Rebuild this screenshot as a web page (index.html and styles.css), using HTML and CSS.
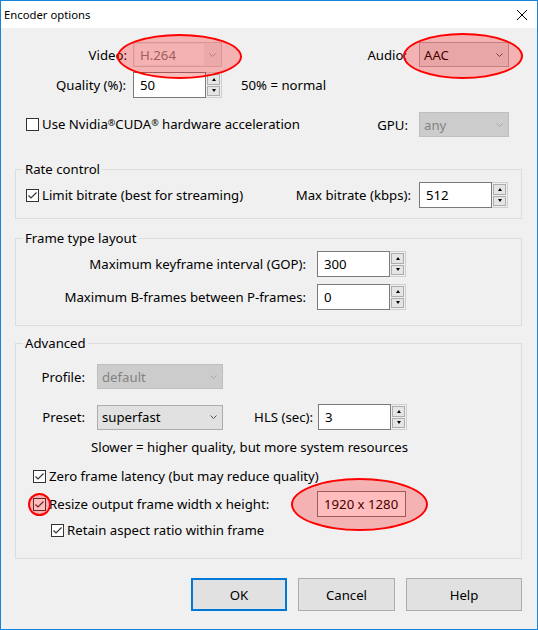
FILE: index.html
```html
<!DOCTYPE html>
<html lang="en">
<head>
<meta charset="utf-8">
<title>Encoder options</title>
<link rel="stylesheet" href="styles.css">
</head>
<body>
<div class="window">
  <div class="titlebar">
    <span class="title">Encoder options</span>
    <svg class="close" width="10" height="10" viewBox="0 0 10 10"><path d="M0 0L10 10M10 0L0 10" stroke="#000" stroke-width="1"/></svg>
  </div>
  <div class="dialog">
    <div class="row row-codec">
      <span class="lbl lbl-video">Video:</span>
      <div class="combo combo-video"><span class="combo-edit">H.264</span><svg class="chev" width="7" height="4" viewBox="0 0 7 4"><path d="M0.5 0.5L3.5 3.5L6.5 0.5" fill="none" stroke="#a0a0a0"/></svg></div>
      <span class="lbl lbl-audio">Audio:</span>
      <div class="combo combo-audio"><span class="combo-text">AAC</span><svg class="chev" width="7" height="4" viewBox="0 0 7 4"><path d="M0.5 0.5L3.5 3.5L6.5 0.5" fill="none" stroke="#505050"/></svg></div>
    </div>
    <div class="row row-quality">
      <span class="lbl lbl-quality">Quality (%):</span>
      <div class="spin spin-quality"><span class="spin-field">50</span><span class="spin-btns"><span class="sb"><i class="tri-up"></i></span><span class="sb"><i class="tri-down"></i></span></span></div>
      <span class="lbl hint">50% = normal</span>
    </div>
    <div class="row row-cuda">
      <div class="check"><svg class="box" viewBox="0 0 13 13"><rect x="0.5" y="0.5" width="12" height="12" fill="#fff" stroke="#333"/></svg><span class="lbl">Use Nvidia<span class="reg">®</span>CUDA<span class="reg">®</span> hardware acceleration</span></div>
      <span class="lbl lbl-gpu">GPU:</span>
      <div class="combo combo-gpu disabled"><span class="combo-text">any</span><svg class="chev" width="7" height="4" viewBox="0 0 7 4"><path d="M0.5 0.5L3.5 3.5L6.5 0.5" fill="none" stroke="#a8a8a8"/></svg></div>
    </div>

    <fieldset class="group group-rate">
      <legend>Rate control</legend>
      <div class="row row-rate">
        <div class="check"><svg class="box" viewBox="0 0 13 13"><rect x="0.5" y="0.5" width="12" height="12" fill="#fff" stroke="#333"/><path d="M2.5 6.5L5 9L10.5 3.5" fill="none" stroke="#333" stroke-width="1.2"/></svg><span class="lbl">Limit bitrate (best for streaming)</span></div>
        <span class="lbl lbl-maxbr">Max bitrate (kbps):</span>
        <div class="spin"><span class="spin-field">512</span><span class="spin-btns"><span class="sb"><i class="tri-up"></i></span><span class="sb"><i class="tri-down"></i></span></span></div>
      </div>
    </fieldset>

    <fieldset class="group group-frame">
      <legend>Frame type layout</legend>
      <div class="row row-frame">
        <span class="lbl lbl-frame">Maximum keyframe interval (GOP):</span>
        <div class="spin spin-frame"><span class="spin-field">300</span><span class="spin-btns"><span class="sb"><i class="tri-up"></i></span><span class="sb"><i class="tri-down"></i></span></span></div>
      </div>
      <div class="row row-frame row-b">
        <span class="lbl lbl-frame">Maximum B-frames between P-frames:</span>
        <div class="spin spin-frame"><span class="spin-field">0</span><span class="spin-btns"><span class="sb"><i class="tri-up"></i></span><span class="sb"><i class="tri-down"></i></span></span></div>
      </div>
    </fieldset>

    <fieldset class="group group-adv">
      <legend>Advanced</legend>
      <div class="row row-profile">
        <span class="lbl lbl-adv">Profile:</span>
        <div class="combo combo-adv disabled"><span class="combo-text">default</span><svg class="chev" width="7" height="4" viewBox="0 0 7 4"><path d="M0.5 0.5L3.5 3.5L6.5 0.5" fill="none" stroke="#a8a8a8"/></svg></div>
      </div>
      <div class="row row-preset">
        <span class="lbl lbl-adv">Preset:</span>
        <div class="combo combo-adv"><span class="combo-text">superfast</span><svg class="chev" width="7" height="4" viewBox="0 0 7 4"><path d="M0.5 0.5L3.5 3.5L6.5 0.5" fill="none" stroke="#505050"/></svg></div>
        <span class="lbl lbl-hls">HLS (sec):</span>
        <div class="spin"><span class="spin-field">3</span><span class="spin-btns"><span class="sb"><i class="tri-up"></i></span><span class="sb"><i class="tri-down"></i></span></span></div>
      </div>
      <div class="lbl note">Slower = higher quality, but more system resources</div>
      <div class="row row-zero">
        <div class="check"><svg class="box" viewBox="0 0 13 13"><rect x="0.5" y="0.5" width="12" height="12" fill="#fff" stroke="#333"/><path d="M2.5 6.5L5 9L10.5 3.5" fill="none" stroke="#333" stroke-width="1.2"/></svg><span class="lbl">Zero frame latency (but may reduce quality)</span></div>
      </div>
      <div class="row row-resize">
        <div class="check check-resize"><svg class="box" viewBox="0 0 13 13"><rect x="0.5" y="0.5" width="12" height="12" fill="#fff" stroke="#333"/><path d="M2.5 6.5L5 9L10.5 3.5" fill="none" stroke="#333" stroke-width="1.2"/></svg><span class="lbl">Resize output frame width x height:</span></div>
        <div class="sizebox">1920 x 1280</div>
      </div>
      <div class="row row-retain">
        <div class="check"><svg class="box" viewBox="0 0 13 13"><rect x="0.5" y="0.5" width="12" height="12" fill="#fff" stroke="#333"/><path d="M2.5 6.5L5 9L10.5 3.5" fill="none" stroke="#333" stroke-width="1.2"/></svg><span class="lbl">Retain aspect ratio within frame</span></div>
      </div>
    </fieldset>

    <div class="buttons">
      <div class="btn btn-ok">OK</div>
      <div class="btn btn-cancel">Cancel</div>
      <div class="btn btn-help">Help</div>
    </div>
  </div>

  <div class="mark mark-video"></div>
  <div class="mark mark-audio"></div>
  <div class="mark mark-resize"></div>
  <div class="mark mark-size"></div>
</div>
</body>
</html>
```

FILE: styles.css
```css
* { box-sizing: border-box; }
html, body { margin: 0; padding: 0; }
body {
  font-family: "Noto Sans", "Open Sans", sans-serif;
  font-size: 13.2px;
  color: #000;
  background: #fff;
}

.window {
  position: relative;
  width: 538px;
  height: 630px;
  border: 1px solid #1883d7;
  background: #f0f0f0;
  display: flex;
  flex-direction: column;
  overflow: hidden;
}

.titlebar {
  height: 27px;
  flex: none;
  background: #fff;
  display: flex;
  align-items: center;
  justify-content: space-between;
  padding: 0 10px 0 3px;
  font-size: 11.3px;
}
.close { display: block; }

.dialog { flex: 1; display: flex; flex-direction: column; }

.row { display: flex; align-items: center; }
.lbl { white-space: nowrap; line-height: 16px; }

/* combos */
.combo {
  height: 25px;
  flex: none;
  display: flex;
  align-items: center;
  border: 1px solid #adadad;
  background: #e1e1e1;
  padding: 0 5px 0 4px;
}
.combo-text { flex: 1; line-height: 16px; }
.chev { flex: none; display: block; }
.combo.disabled { background: #cccccc; border-color: #bfbfbf; color: #838383; }
.combo-video {
  background: #e4e4e4;
  border-color: #cccccc;
  padding: 1px 5px 1px 1px;
  color: #808080;
}
.combo-edit {
  width: 69px;
  height: 100%;
  background: #f0f0f0;
  padding-left: 5px;
  display: flex;
  align-items: center;
  margin-right: auto;
}

/* spinners */
.spin { display: flex; width: 89px; height: 26px; flex: none; }
.spin-field {
  flex: 1;
  background: #fff;
  border: 1px solid #7a7a7a;
  padding-left: 6px;
  display: flex;
  align-items: center;
}
.spin-btns {
  width: 16px;
  display: flex;
  flex-direction: column;
  gap: 1px;
  padding: 1px;
  border: 1px solid #cfcfcf;
  border-left: none;
  background: #f0f0f0;
}
.sb {
  flex: 1;
  border: 1px solid #adadad;
  background: #e5e5e5;
  display: flex;
  align-items: center;
  justify-content: center;
}
.tri-up, .tri-down { display: block; width: 1px; height: 0; border-left: 2px solid transparent; border-right: 2px solid transparent; }
.tri-up { border-bottom: 3px solid #000; }
.tri-down { border-top: 3px solid #000; }

/* checkboxes */
.check { display: flex; align-items: center; gap: 3px; flex: none; }
.box { width: 13px; height: 13px; display: block; flex: none; }
.reg { font-size: 9px; position: relative; top: -3px; }

/* top rows */
.row-codec { margin-top: 14px; height: 25px; padding-right: 28px; }
.lbl-video { width: 126px; text-align: right; flex: none; }
.combo-video { margin-left: 6px; width: 89px; }
.lbl-audio { flex: 1; text-align: right; margin-right: 12px; }
.combo-audio { width: 90px; }

.row-quality { margin-top: 5px; height: 26px; }
.lbl-quality { width: 125px; text-align: right; flex: none; }
.spin-quality { margin-left: 7px; }
.hint { margin-left: 19px; }

.row-cuda { margin-top: 14px; height: 25px; padding: 0 28px 0 25px; }
.lbl-gpu { flex: 1; text-align: right; margin-right: 11px; }
.combo-gpu { width: 90px; }

/* groups */
.group {
  margin: 0 15px 0 14px;
  border: 1px solid #dcdcdc;
  padding: 5px 13px 10px 10px;
  min-width: 0;
}
.group legend { padding: 0 2px; margin-left: -3px; line-height: 16px; }
.group-rate { margin-top: 24px; }
.group-frame { margin-top: 11px; padding-bottom: 15px; }
.group-adv { margin-top: 9px; padding-top: 13px; padding-bottom: 20px; }

.row-rate { height: 26px; }
.lbl-maxbr { flex: 1; text-align: right; margin-right: 8px; }

.row-frame { height: 26px; }
.row-b { margin-top: 7px; }
.lbl-frame { width: 280px; text-align: right; flex: none; }
.spin-frame { margin-left: 11px; }

.row-profile { height: 25px; }
.row-preset { height: 26px; margin-top: 15px; }
.lbl-adv { width: 59px; text-align: right; flex: none; }
.combo-adv { margin-left: 12px; width: 126px; }
.lbl-hls { width: 90px; text-align: right; flex: none; margin-right: 5px; }
.note { margin: 9px 0 0 65px; }
.row-zero { margin-top: 13px; height: 16px; padding-left: 7px; }
.row-resize { margin-top: 7px; height: 26px; padding-left: 7px; }
.check-resize { width: 284px; }
.sizebox {
  width: 89px;
  height: 26px;
  flex: none;
  background: #fff;
  border: 1px solid #7a7a7a;
  padding-left: 6px;
  display: flex;
  align-items: center;
}
.row-retain { margin-top: 5px; height: 16px; padding-left: 25px; }

/* buttons */
.buttons {
  display: flex;
  justify-content: flex-end;
  gap: 11px;
  margin-top: 19px;
  padding-right: 15px;
}
.btn {
  height: 33px;
  background: #e1e1e1;
  border: 1px solid #adadad;
  display: flex;
  align-items: center;
  justify-content: center;
}
.btn-ok { width: 96px; border: 2px solid #0078d7; }
.btn-cancel { width: 97px; }
.btn-help { width: 116px; }

/* red annotation marks */
.mark {
  position: absolute;
  border: 2px solid #ff0000;
  background: rgba(255, 0, 0, 0.26);
  border-radius: 50%;
}
.mark-video { left: 116px; top: 33px; width: 125px; height: 45px; }
.mark-audio { left: 402px; top: 32px; width: 120px; height: 46px; }
.mark-resize { left: 27px; top: 492px; width: 23px; height: 23px; }
.mark-size { left: 290px; top: 477px; width: 137px; height: 53px; }
```
